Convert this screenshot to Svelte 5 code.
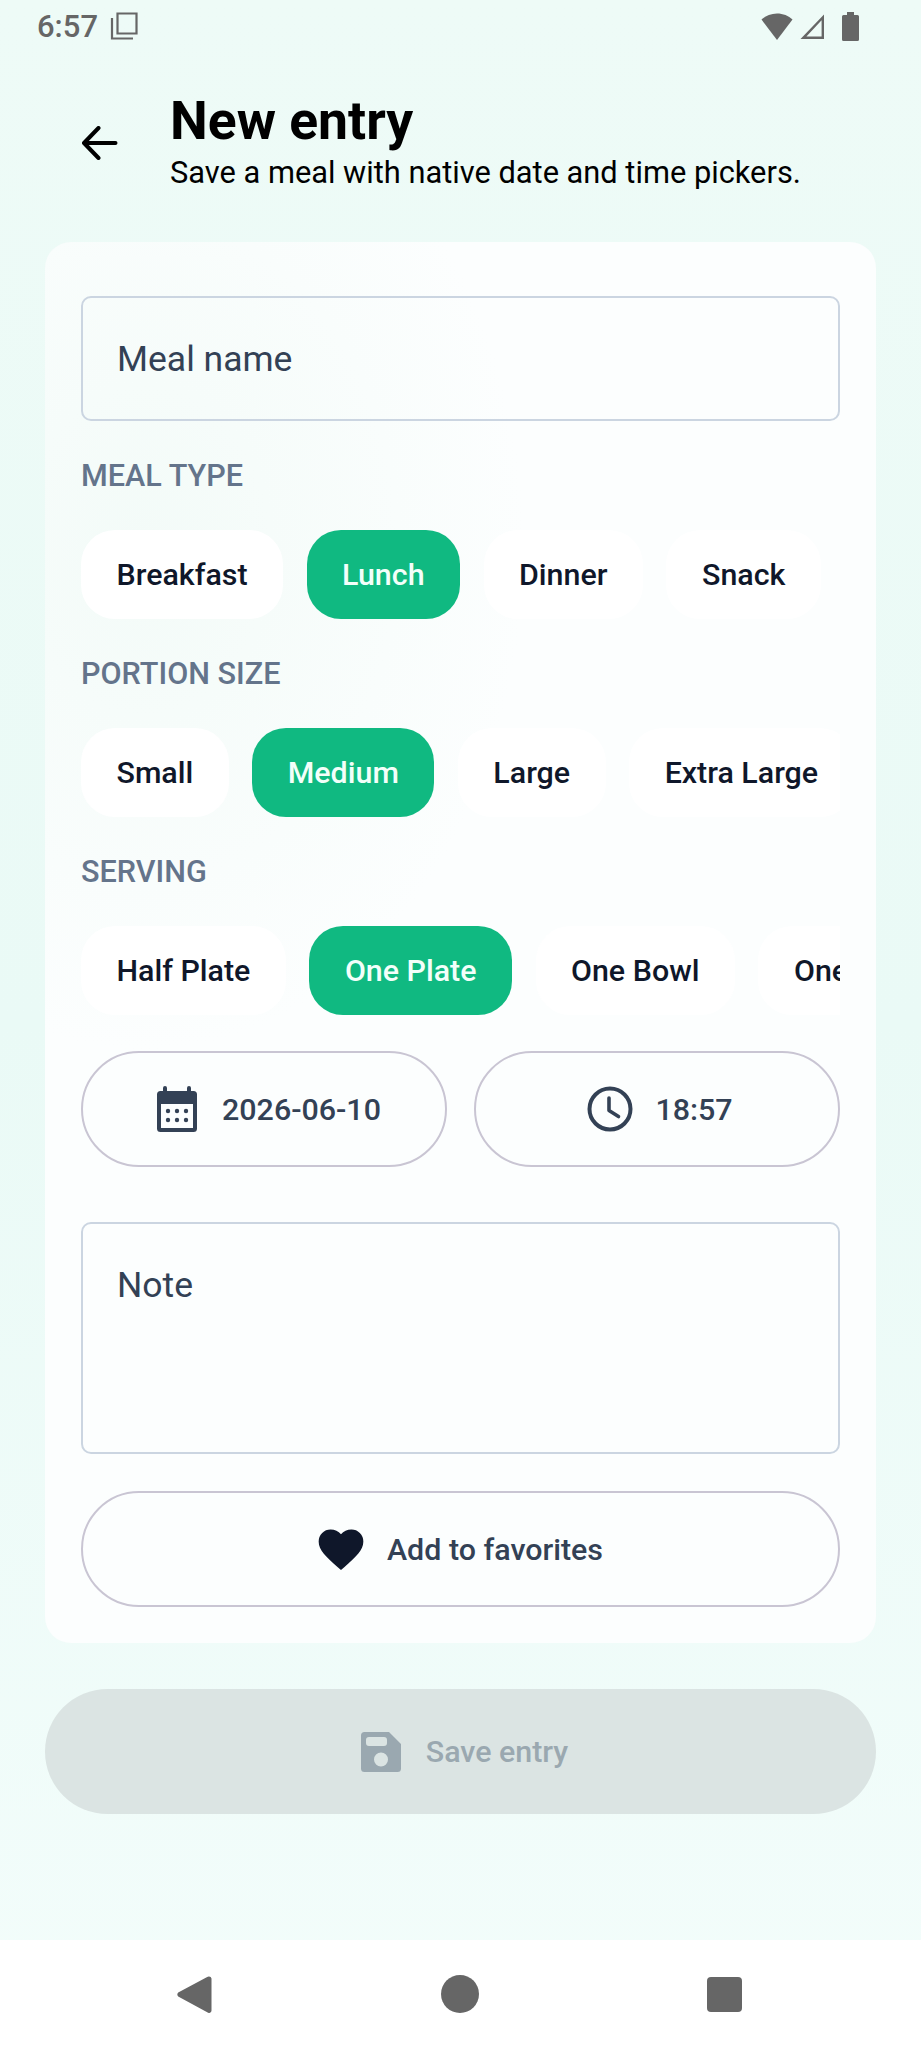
<script>
  const sections = [
    { label: 'MEAL TYPE', options: ['Breakfast', 'Lunch', 'Dinner', 'Snack'], selected: 'Lunch' },
    { label: 'PORTION SIZE', options: ['Small', 'Medium', 'Large', 'Extra Large'], selected: 'Medium' },
    { label: 'SERVING', options: ['Half Plate', 'One Plate', 'One Bowl', 'One Cup'], selected: 'One Plate' }
  ];
</script>

<div class="screen">
  <div class="status">
    <div class="status-left">
      <span class="time">6:57</span>
      <svg class="copy" viewBox="0 0 28 28"><path d="M7.500 1.500h19v20h-19z M2 6v20.500h21" fill="none" stroke="#666" stroke-width="2.200"/></svg>
    </div>
    <div class="status-right">
      <svg class="wifi" viewBox="0 0 32 27"><path d="M16 27 0.500 6.500C4.500 2.800 10 .5 16 .5s11.500 2.300 15.500 6z" fill="#666"/></svg>
      <svg class="signal" viewBox="0 0 26 27"><path d="M25 1.500V26H1.500zM22.600 7.300 7.400 23.600h15.200z" fill="#666" fill-rule="evenodd"/></svg>
      <svg class="battery" viewBox="0 0 17 29"><path d="M5 0h7v3h3.500a1.500 1.500 0 0 1 1.500 1.500v23a1.500 1.500 0 0 1-1.500 1.500h-14A1.500 1.500 0 0 1 0 27.500v-23A1.500 1.500 0 0 1 1.500 3H5z" fill="#666"/></svg>
    </div>
  </div>

  <header class="header">
    <svg class="back" viewBox="0 0 36 34"><path d="M34 17H3M17 2 2.500 17 17 32" fill="none" stroke="#000" stroke-width="4" stroke-linecap="round" stroke-linejoin="round"/></svg>
    <div class="titles">
      <h1>New entry</h1>
      <p>Save a meal with native date and time pickers.</p>
    </div>
  </header>

  <main class="card">
    <div class="field name">Meal name</div>

    {#each sections as section}
      <div class="label">{section.label}</div>
      <div class="chips">
        {#each section.options as option}
          <div class="chip" class:active={option === section.selected}>{option}</div>
        {/each}
      </div>
    {/each}

    <div class="pickers">
      <div class="outline date-btn">
        <svg class="icon-cal" viewBox="0 0 40 46">
          <path d="M8 0a2 2 0 0 1 2 2v3h20V2a2 2 0 0 1 4 0v3h2.500A3.500 3.500 0 0 1 40 8.500v34a3.500 3.500 0 0 1-3.500 3.500h-33A3.500 3.500 0 0 1 0 42.500v-34A3.500 3.500 0 0 1 3.500 5H6V2a2 2 0 0 1 2-2zM4 18v24h32V18z" fill="#334155" fill-rule="evenodd"/>
          <g fill="#334155"><circle cx="11" cy="25" r="2.200"/><circle cx="20" cy="25" r="2.200"/><circle cx="29" cy="25" r="2.200"/><circle cx="11" cy="34" r="2.200"/><circle cx="20" cy="34" r="2.200"/><circle cx="29" cy="34" r="2.200"/></g>
        </svg>
        <span>2026-06-10</span>
      </div>
      <div class="outline time-btn">
        <svg class="icon-clock" viewBox="0 0 46 46"><circle cx="23" cy="23" r="20.500" fill="none" stroke="#334155" stroke-width="4"/><path d="M22 12v12.500l9.500 6" fill="none" stroke="#334155" stroke-width="3.600" stroke-linecap="round" stroke-linejoin="round"/></svg>
        <span>18:57</span>
      </div>
    </div>

    <div class="field note">Note</div>

    <div class="outline favorite">
      <svg class="icon-heart" viewBox="0 0 24 22"><path d="M12 21.500 10.300 20C4.200 14.500.3 11 .3 6.500A6.200 6.200 0 0 1 6.600.3c2.100 0 4.100 1 5.400 2.500C13.300 1.300 15.300.3 17.400.3a6.200 6.200 0 0 1 6.300 6.200c0 4.500-3.900 8-10 13.500z" fill="#0f172a"/></svg>
      <span>Add to favorites</span>
    </div>
  </main>

  <div class="save">
    <svg class="icon-save" viewBox="0 0 40 40"><path d="M3.500 0H28l12 12v24.500a3.500 3.500 0 0 1-3.500 3.500h-33A3.500 3.500 0 0 1 0 36.500v-33A3.500 3.500 0 0 1 3.500 0zM8 5a3 3 0 0 0-3 3v3a3 3 0 0 0 3 3h15a3 3 0 0 0 3-3V8a3 3 0 0 0-3-3zm12 15.500a7 7 0 1 0 0 14 7 7 0 0 0 0-14z" fill="#9aa8b0" fill-rule="evenodd"/></svg>
    <span>Save entry</span>
  </div>

  <nav class="navbar">
    <svg class="nav-back" viewBox="0 0 35 39"><path d="M32 1.500a2.500 2.500 0 0 1 2.500 2v32a2.500 2.500 0 0 1-4.300 1.700L1.200 21.500a3 3 0 0 1 0-4L30.200 2a2.500 2.500 0 0 1 1.800-.5z" fill="#666"/></svg>
    <span class="nav-home"></span>
    <span class="nav-square"></span>
  </nav>
</div>

<style>
  :global(body) {
    margin: 0;
    background: #fff;
  }
  .screen {
    width: 921px;
    height: 2048px;
    display: flex;
    flex-direction: column;
    overflow: hidden;
    font-family: Roboto, "Liberation Sans", sans-serif;
    background: linear-gradient(180deg, #eefbf7 0%, #eafaf6 50%, #f3fdfb 100%);
  }
  .status {
    height: 52px;
    flex: none;
    display: flex;
    justify-content: space-between;
    align-items: center;
    padding: 0 62px 0 37px;
    box-sizing: border-box;
  }
  .status-left, .status-right { display: flex; align-items: center; }
  .time { font-size: 31px; color: #666; font-weight: 500; }
  .copy { width: 28px; height: 28px; margin-left: 12px; }
  .wifi { width: 34px; height: 27px; }
  .signal { width: 26px; height: 27px; margin-left: 5px; }
  .battery { width: 17px; height: 29px; margin-left: 17px; }

  .header {
    display: flex;
    align-items: center;
    padding: 0 0 0 81px;
    height: 170px;
    flex: none;
  }
  .back { width: 37px; height: 34px; margin-right: 52px; margin-top: 12px; }
  .titles { margin-top: 8px; }
  .titles h1 {
    margin: 0;
    font-size: 53.500px;
    line-height: 60px;
    font-weight: 700;
    color: #000;
  }
  .titles p {
    margin: 4px 0 0;
    font-size: 30.800px;
    line-height: 36px;
    color: #000;
  }

  .card {
    margin: 20px 45px 0;
    padding: 54px 36px 36px;
    background:
      radial-gradient(ellipse 380px 500px at 12% 22%, #f3fbf8 0%, rgba(243, 251, 248, 0) 100%),
      #fcfefe;
    border-radius: 26px;
    height: 1401px;
    box-sizing: border-box;
    flex: none;
  }
  .field {
    border: 2.500px solid #cbd5e1;
    border-radius: 10px;
    box-sizing: border-box;
    padding: 0 34px;
    font-size: 35.500px;
    color: #334155;
  }
  .name { height: 125px; display: flex; align-items: center; }
  .label {
    height: 109px;
    display: flex;
    align-items: center;
    font-size: 30.600px;
    font-weight: 500;
    color: #64748b;
  }
  .chips {
    display: flex;
    gap: 23.500px;
    overflow: hidden;
  }
  .chip {
    height: 89px;
    padding: 0 35.500px;
    flex: none;
    display: flex;
    align-items: center;
    background: #fff;
    border-radius: 34px;
    font-size: 30.400px;
    font-weight: 500;
    color: #0f172a;
  }
  .chip.active { background: #10b981; color: #f3fffa; }

  .pickers {
    display: grid;
    grid-template-columns: 1fr 1fr;
    gap: 27px;
    margin-top: 36px;
  }
  .outline {
    height: 116px;
    box-sizing: border-box;
    border: 2.500px solid #c9c5d3;
    border-radius: 58px;
    display: flex;
    align-items: center;
    justify-content: center;
    gap: 25px;
    font-size: 30.400px;
    font-weight: 500;
    color: #334155;
  }
  .date-btn { padding-left: 10px; }
  .time-btn { padding-left: 6px; gap: 22px; }
  .icon-cal { width: 40px; height: 46px; }
  .icon-clock { width: 46px; height: 46px; }
  .note {
    height: 232px;
    margin-top: 55px;
    padding-top: 40px;
  }
  .favorite { margin-top: 37px; gap: 23px; }
  .icon-heart { width: 46px; height: 42px; margin-top: 2px; }

  .save {
    margin: 46px 45px 0;
    height: 125px;
    flex: none;
    border-radius: 63px;
    background: #dbe4e3;
    display: flex;
    align-items: center;
    justify-content: center;
    gap: 25px;
    padding-left: 8px;
    font-size: 30.400px;
    font-weight: 500;
    color: #9aa8b0;
  }
  .icon-save { width: 40px; height: 40px; }

  .navbar {
    margin-top: auto;
    height: 108px;
    flex: none;
    background: #fff;
    position: relative;
    display: flex;
    align-items: center;
  }
  .nav-back { width: 35px; height: 39px; margin-left: 177px; }
  .nav-home {
    width: 38px;
    height: 38px;
    margin-left: 229px;
    border-radius: 50%;
    background: #666;
  }
  .nav-square {
    width: 35px;
    height: 35px;
    margin-left: 228px;
    border-radius: 4px;
    background: #666;
  }
</style>
